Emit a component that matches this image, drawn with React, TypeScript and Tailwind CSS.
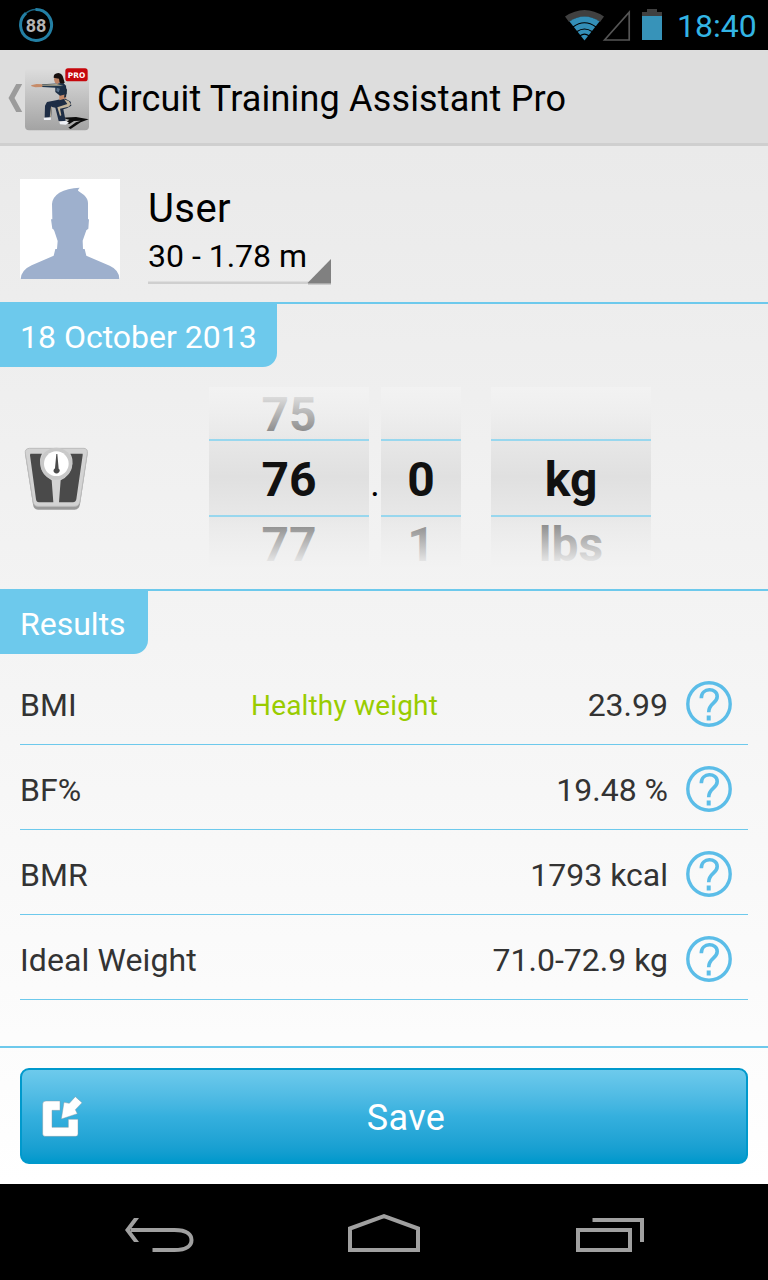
import type { ReactNode } from 'react'

interface Result { label: string; note?: string; value: string }

const RESULTS: Result[] = [
  { label: 'BMI', note: 'Healthy weight', value: '23.99' },
  { label: 'BF%', value: '19.48 %' },
  { label: 'BMR', value: '1793 kcal' },
  { label: 'Ideal Weight', value: '71.0-72.9 kg' },
]

function StatusBar() {
  return (
    <div className="flex h-[50px] items-center bg-black pl-[18px] pr-3">
      <svg className="h-9 w-9" viewBox="0 0 36 36">
        <circle cx="18" cy="18" r="15.5" fill="none" stroke="#1b6785" strokeWidth="1.6" />
        <path d="M17.5 2.5A15.5 15.5 0 1 1 8 6.2" fill="none" stroke="#237fa4" strokeWidth="3" />
        <text x="18" y="24.6" textAnchor="middle" fontFamily="Roboto, sans-serif" fontWeight="700" fontSize="18" fill="#b4b4b4">88</text>
      </svg>
      <svg className="ml-auto h-[50px] w-[100px]" viewBox="0 0 100 50">
        <path d="M0 16.5Q19.5 3.5 39 16.5L35 22Q19.5 11.5 4 22Z" fill="#404040" />
        <path d="M4.5 21.5Q19.5 11.5 34.5 21.5L19.5 40.5Z" fill="#338fb8" />
        <g fill="none" stroke="#000" strokeWidth="1.2">
          <path d="M8 27Q19.5 18.5 31 27" />
          <path d="M12 31.5Q19.5 26.5 27 31.5" />
          <path d="M15 35.8Q19.5 32.5 24 35.8" />
        </g>
        <path d="M39.5 40L64.2 12.2V40Z" fill="none" stroke="#555" strokeWidth="1.7" />
        <path d="M77 12H82V9H92V12H97V16H77Z" fill="#404040" />
        <path d="M77 16H97V40H77Z" fill="#3793b9" />
      </svg>
      <span className="ml-3 w-[79px] whitespace-nowrap pt-px text-[32px] leading-[50px] text-[#33b5e5]">18:40</span>
    </div>
  )
}

function AppIcon() {
  return (
    <svg className="h-[65px] w-16" viewBox="75 200 192 195">
      <defs>
        <linearGradient id="tile" x1="0" y1="0" x2="0" y2="1">
          <stop offset="0" stopColor="#dddddd" />
          <stop offset="1" stopColor="#a3a3a3" />
        </linearGradient>
      </defs>
      <rect x="75" y="204" width="192" height="186" rx="12" fill="url(#tile)" />
      {/* floor shadow */}
      <path d="M186 352L228 350L266 357L242 366L212 386L205 382L228 366L242 361L222 362L208 371L196 368L208 358Z" fill="#0c0c0c" />
      {/* legs */}
      <path d="M168 300L194 294L212 304L214 316L200 324L190 327L197 362L176 362L166 322L156 320L153 352L134 352L135 316L141 305Z" fill="#1e2d45" />
      <path d="M192 297L206 302L213 312L206 319L180 325L184 345L180 347L172 321L202 311Z" fill="#c2b49b" />
      <path d="M153 318L156 320L152 352L149 352Z" fill="#b8aa93" />
      <path d="M131 352L153 351L152 359L132 359ZM178 364L197 361L207 367L197 373L180 372Z" fill="#eef0f5" />
      {/* torso and arms */}
      <path d="M178 278L196 276L199 294L178 300Z" fill="#c28869" />
      <path d="M166 252L190 248L198 256L200 281L180 286L166 275Z" fill="#1c2e45" />
      <path d="M126 252L185 249L191 257L180 263L126 260Z" fill="#20364d" />
      <path d="M126 253L170 251L190 256L126 256Z" fill="#b1a98f" />
      <path d="M93 255L110 251L127 252V260L106 261L95 258Z" fill="#c68b68" />
      <path d="M194 257L201 268L198 290L192 292L195 272Z" fill="#1a293c" />
      <path d="M170 262L180 265L176 276L169 272Z" fill="#58708b" />
      {/* head */}
      <path d="M164 225L178 224L181 244L172 251L165 247L162 238Z" fill="#be8264" />
      <path d="M161 232Q160 219 175 218Q187 219 190 233L194 247Q188 252 179 248L177 235Z" fill="#17100f" />
      <rect x="196" y="204" width="67" height="39" rx="8" fill="#c6070c" />
      <text x="229.500" y="232" textAnchor="middle" fontFamily="DejaVu Sans, sans-serif" fontWeight="700" fontSize="23" textLength="52" lengthAdjust="spacingAndGlyphs" fill="#fff">PRO</text>
    </svg>
  )
}

function TitleBar() {
  return (
    <div className="flex h-24 items-center border-b-[3px] border-[#cfcfcf] bg-[#dddddd] pl-[8px] pt-[5px]">
      <svg className="-mt-[3px] h-[28px] w-[17px] shrink-0" viewBox="0 0 17 28">
        <path d="M8.200 0H14.200L6.500 14L14.200 28H8.200L.5 14Z" fill="#9b9b9b" />
      </svg>
      <AppIcon />
      <h1 className="ml-2 whitespace-nowrap text-4xl leading-[48px] tracking-[0.17px] text-black">Circuit Training Assistant Pro</h1>
    </div>
  )
}

function Profile() {
  return (
    <div className="flex h-[156px] pl-5 pt-[33px]">
      <svg className="h-[100px] w-[100px] bg-white" viewBox="60 57 300 300">
        <path d="M62 357Q64 330 95 316L161 287L166 267H171L173 243L163 213Q160 206 157 206L153 178H157L156 132Q157 112 178 98Q202 84 239 83Q234 87 234 92L252 105Q264 116 264 130V178H267L265 206L259 211L248 242L249 267H254L259 287L329 317Q358 330 358 357Z" fill="#9eb0cd" />
      </svg>
      <div className="relative ml-7 mt-[5px] h-[105px] w-[184px] text-black">
        <div className="h-[49px] whitespace-nowrap text-[40px] leading-[50px] tracking-[0.4px]">User</div>
        <div className="h-[46px] whitespace-nowrap text-[32px] leading-[46px]">30 - 1.78 m</div>
        {/* spinner underline and corner */}
        <svg className="absolute left-0 top-[71px] h-[32px] w-[184px]" viewBox="0 0 184 32">
          <path d="M0 26.500H183V29H0Z" fill="#cfcfcf" />
          <path d="M160 28H183V29.500H160Z" fill="#aaaaaa" />
          <path d="M159.500 28L183 4V28Z" fill="#808080" />
        </svg>
      </div>
    </div>
  )
}

function Section({ title, width, children, className }: { title: string; width: string; children: ReactNode; className: string }) {
  return (
    <section className={`border-t-2 border-[#6dc9ec] ${className}`}>
      <h2 className={`h-[63px] whitespace-nowrap rounded-br-[14px] bg-[#6dc9ec] pl-5 text-[32px] leading-[66px] text-white ${width}`}>{title}</h2>
      {children}
    </section>
  )
}

function ScaleIcon() {
  return (
    <svg className="h-[66px] w-[66px]" viewBox="69 48 198 198">
      <path d="M88 60H252Q264 60 262 76L240 223Q237 239 224 239H114Q101 239 99 223L76 76Q74 62 88 60Z" fill="#9a9a9a" />
      <path d="M88 55H252Q264 56 262 70L240 214Q237 229 224 229H114Q101 229 99 214L76 70Q74 56 88 55Z" fill="#d3d3d3" stroke="#bcbcbc" strokeWidth="3" />
      <path d="M91 71H126Q118 84 121 102Q125 135 155 151L160 217H117Q109 217 108 208L90 76Z" fill="#4a4a4a" />
      <path d="M248 71H211Q219 84 217 102Q212 137 182 151L177 217H219Q227 217 229 208L248 76Z" fill="#4a4a4a" />
      <circle cx="169" cy="101" r="48" fill="#c9c9c9" />
      <circle cx="169" cy="101" r="37" fill="#fff" />
      <path d="M169 72H172L176 116Q182 120 177 127Q170 134 162 127Q158 120 165 115Z" fill="#4b4b4b" />
    </svg>
  )
}

function Wheel({ items, width }: { items: string[]; width: string }) {
  return (
    <div className={`relative h-[180px] bg-linear-to-b from-[#f2f2f2] via-[#e0e0e0] to-[#f2f2f2] text-center text-5xl font-bold text-[#111111] ${width}`}>
      <div className="-mt-[5px] h-[185px]">
        {items.map((item, i) => (
          <div key={i} className="h-[65px] leading-[65px]">{item}</div>
        ))}
      </div>
      <div className="absolute inset-x-0 top-0 h-[52px] bg-linear-to-b from-[#f2f2f2] to-[#e8e8e8]/50" />
      <div className="absolute inset-x-0 top-[52px] h-[78px] border-y-2 border-[#98d7ee]" />
      <div className="absolute inset-x-0 bottom-0 h-[50px] bg-linear-to-t from-[#f2f2f2] to-[#e8e8e8]/50" />
    </div>
  )
}

function WeightPicker() {
  return (
    <div className="flex pt-5">
      <div className="w-[209px] pl-[23px] pt-[59px]"><ScaleIcon /></div>
      <Wheel items={['75', '76', '77']} width="w-[160px]" />
      <span className="w-3 pt-[73px] text-center text-[36px] leading-[48px] text-black">.</span>
      <Wheel items={['', '0', '1']} width="w-[80px]" />
      <div className="w-[30px]" />
      <Wheel items={['', 'kg', 'lbs']} width="w-[160px]" />
    </div>
  )
}

function HelpIcon() {
  return (
    <svg className="-mt-[2px] h-[46px] w-[46px]" viewBox="0 0 46 46" fill="none" stroke="#5bbde8">
      <circle cx="23" cy="23" r="21.200" strokeWidth="3.400" />
      <path d="M15.300 17.200C15.300 6.200 31.200 6.300 31.200 15.500C31.200 22.500 22.700 22 22.700 31.200" strokeWidth="3.600" />
      <path d="M22.700 34.500V39.500" strokeWidth="4" />
    </svg>
  )
}

function ResultRow({ label, note, value }: Result) {
  return (
    <div className="mx-5 flex h-[85px] items-center border-b border-[#6dc9ec] pr-4 pt-[6px] text-[32px] text-[#333333]">
      <span className="w-[231px] whitespace-nowrap tracking-[0.1px]">{label}</span>
      {note && <span className="whitespace-nowrap pt-[2px] text-[28px] tracking-[0.17px] text-[#99cc00]">{note}</span>}
      <span className="ml-auto mr-[18px] whitespace-nowrap">{value}</span>
      <HelpIcon />
    </div>
  )
}

function SaveBar() {
  return (
    <div className="h-[138px] border-t-2 border-[#6dc9ec] px-5 pt-5">
      <button className="flex h-24 w-full items-center rounded-[9px] border-2 border-[#0099cc] bg-linear-to-b from-[#6dcaec] via-[#35b0de] to-[#0099cc] pl-[18px] text-4xl text-white">
        <svg className="mt-px h-[44px] w-[44px]" viewBox="120 165 132 132">
          <g fill="#fff" stroke="#8299a3" strokeOpacity=".45" strokeWidth="3">
            <path d="M138 183H180V211H156V262H205V238H234V282Q234 289 227 289H136Q128 289 128 281V192Q128 183 138 183Z" />
            <path d="M192 187L208 190L226 170L246 188L226 209L232 221L184 237Z" />
          </g>
        </svg>
        <span className="ml-[-18px] flex-1 pt-[3px] text-center tracking-[0.4px]">Save</span>
      </button>
    </div>
  )
}

function NavBar() {
  return (
    <div className="flex h-24 bg-black">
      <svg className="h-24 w-[768px]" viewBox="0 0 768 96" fill="none" stroke="#a0a0a0" strokeWidth="4">
        <path d="M130 46H174C187 46 191 51 191 56C191 61 187 66 174 66H152" transform="translate(0.500 0)" />
        <path d="M134 34H139L130 46L139 58H134L125 46Z" fill="#a0a0a0" stroke="none" />
        <path d="M350 66V44.500L384 32.200L418 44.500V66Z" />
        <path d="M578 46H630V66H578ZM592.500 36H642V58" />
      </svg>
    </div>
  )
}

export default function App() {
  return (
    <div className="h-[1280px] w-[768px] overflow-hidden bg-black font-['Roboto',sans-serif]">
      <StatusBar />
      <TitleBar />
      <main className="h-[1038px] bg-linear-to-b from-[#eaeaea] to-white">
        <Profile />
        <Section title="18 October 2013" width="w-[277px]" className="h-[287px]">
          <WeightPicker />
        </Section>
        <Section title="Results" width="w-[148px]" className="h-[457px]">
          <div className="pt-[6px]">
            {RESULTS.map(r => <ResultRow key={r.label} {...r} />)}
          </div>
        </Section>
        <SaveBar />
      </main>
      <NavBar />
    </div>
  )
}
